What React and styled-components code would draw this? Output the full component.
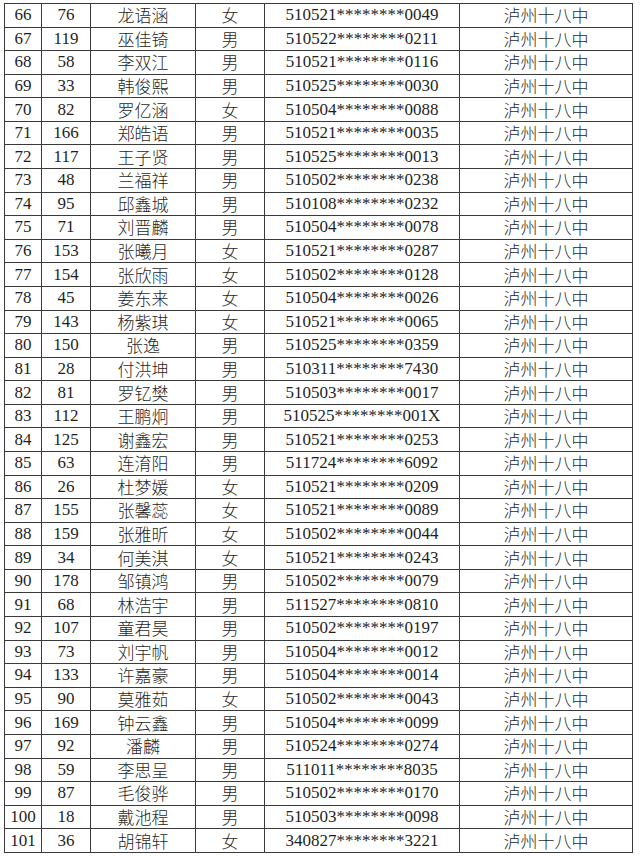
import React from "react";
import styled, { createGlobalStyle } from "styled-components";

const GlobalStyle = createGlobalStyle`
  html, body {
    margin: 0;
    padding: 0;
    background: #ffffff;
  }
  body {
    font-family: "Liberation Serif", "Noto Sans CJK SC", serif;
  }
`;

const Page = styled.div`
  padding: 3px 0 0 4px;
`;

const Table = styled.table`
  border-collapse: collapse;
  table-layout: fixed;
  width: 628px;
  color: #1f1f1f;
  font-size: 17px;
`;

const Row = styled.tr`
  height: 23.58px;
`;

const Cell = styled.td`
  border: 1px solid #3a3a3a;
  padding: 0;
  text-align: center;
  vertical-align: middle;
  line-height: 22px;
  white-space: nowrap;
  overflow: hidden;
  font-family: ${(p) =>
    p.$cjk
      ? '"Noto Sans CJK SC", "Liberation Serif", sans-serif'
      : '"Liberation Serif", "Noto Sans CJK SC", serif'};
  font-weight: ${(p) => (p.$cjk ? 300 : 400)};
`;

const widths = [37, 49, 105, 69, 195, 173];

const rows = `66 76 龙语涵 女 510521********0049
67 119 巫佳锜 男 510522********0211
68 58 李双江 男 510521********0116
69 33 韩俊熙 男 510525********0030
70 82 罗亿涵 女 510504********0088
71 166 郑皓语 男 510521********0035
72 117 王子贤 男 510525********0013
73 48 兰福祥 男 510502********0238
74 95 邱鑫城 男 510108********0232
75 71 刘晋麟 男 510504********0078
76 153 张曦月 女 510521********0287
77 154 张欣雨 女 510502********0128
78 45 姜东来 女 510504********0026
79 143 杨紫琪 女 510521********0065
80 150 张逸 男 510525********0359
81 28 付洪坤 男 510311********7430
82 81 罗钇樊 男 510503********0017
83 112 王鹏炯 男 510525********001X
84 125 谢鑫宏 男 510521********0253
85 63 连淯阳 男 511724********6092
86 26 杜梦媛 女 510521********0209
87 155 张馨蕊 女 510521********0089
88 159 张雅昕 女 510502********0044
89 34 何美淇 女 510521********0243
90 178 邹镇鸿 男 510502********0079
91 68 林浩宇 男 511527********0810
92 107 童君昊 男 510502********0197
93 73 刘宇帆 男 510504********0012
94 133 许嘉豪 男 510504********0014
95 90 莫雅茹 女 510502********0043
96 169 钟云鑫 男 510504********0099
97 92 潘麟 男 510524********0274
98 59 李思呈 男 511011********8035
99 87 毛俊骅 男 510502********0170
100 18 戴池程 男 510503********0098
101 36 胡锦轩 女 340827********3221`
  .split("\n")
  .map((line) => line.trim().split(" "));

const App = () => {
  return (
    <>
      <GlobalStyle />
      <Page>
        <Table>
          <colgroup>
            {widths.map((w, i) => (
              <col key={i} style={{ width: w }} />
            ))}
          </colgroup>
          <tbody>
            {rows.map(([no, seat, name, sex, id]) => (
              <Row key={no}>
                <Cell>{no}</Cell>
                <Cell>{seat}</Cell>
                <Cell $cjk>{name}</Cell>
                <Cell $cjk>{sex}</Cell>
                <Cell>{id}</Cell>
                <Cell $cjk>泸州十八中</Cell>
              </Row>
            ))}
          </tbody>
        </Table>
      </Page>
    </>
  );
};

export default App;
